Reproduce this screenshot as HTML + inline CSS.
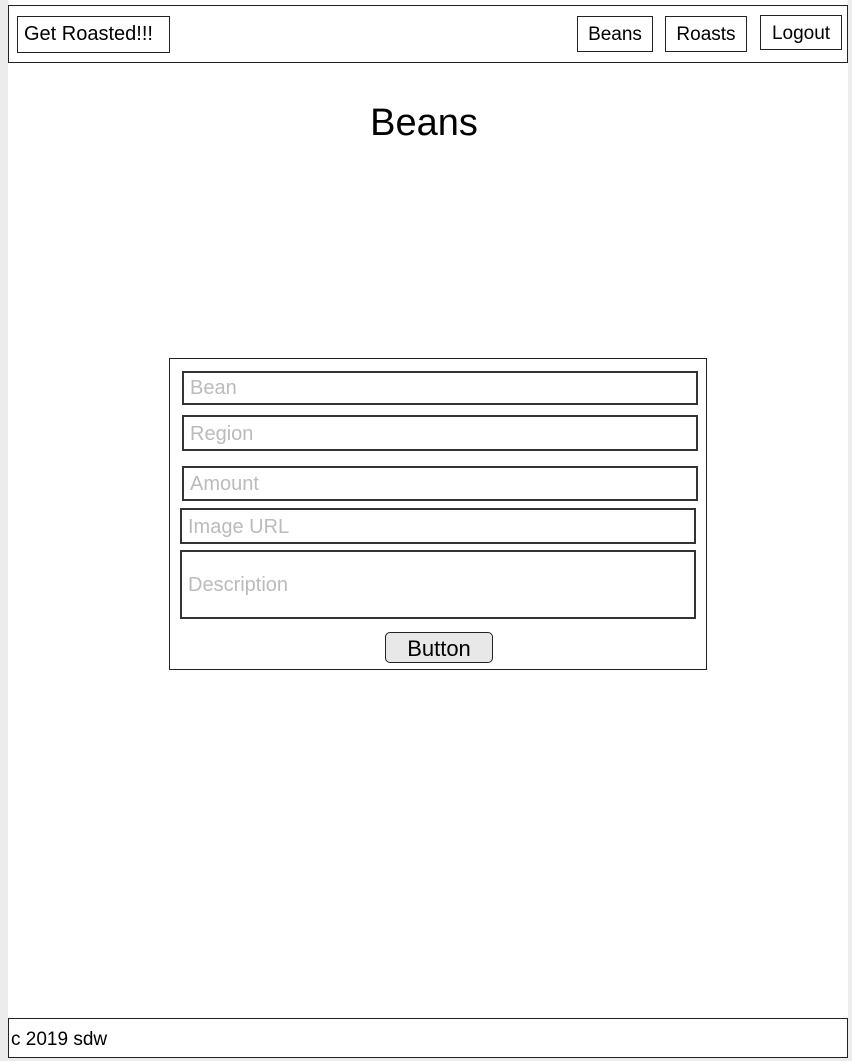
<!DOCTYPE html>
<html><head><style>
body{margin:0;width:852px;height:1054px;background:#ececec;position:relative;overflow:hidden;font-family:"Liberation Sans",Arial,sans-serif;}
.abs{position:absolute;box-sizing:border-box;}
.main{left:8px;top:0;width:840px;height:1054px;background:#fff;}
.hdr{left:8px;top:5px;width:840px;height:58px;border:1.5px solid #222;background:#fff;}
.btn{border:1.5px solid #222;font-size:19px;line-height:35px;text-align:center;color:#000;}
.inp{border:2px solid #333;font-size:20px;color:#bbb;padding-left:6px;background:#fff;}
</style></head><body>
<div class="abs main"></div>
<div class="abs hdr"></div>
<div class="abs btn" style="left:17px;top:16px;width:153px;height:37px;text-align:left;padding-left:6px;font-size:20px;">Get Roasted!!!</div>
<div class="abs btn" style="left:577px;top:16px;width:76px;height:36px;">Beans</div>
<div class="abs btn" style="left:665px;top:16px;width:82px;height:36px;">Roasts</div>
<div class="abs btn" style="left:760px;top:15px;width:82px;height:35px;">Logout</div>
<div class="abs" style="left:8px;top:102px;width:832px;text-align:center;font-size:38px;">Beans</div>
<div class="abs" style="left:169px;top:358px;width:538px;height:312px;border:1.5px solid #222;"></div>
<div class="abs inp" style="left:182px;top:371px;width:516px;height:34px;line-height:31px;">Bean</div>
<div class="abs inp" style="left:182px;top:415px;width:516px;height:36px;line-height:34px;">Region</div>
<div class="abs inp" style="left:182px;top:466px;width:516px;height:35px;line-height:33px;">Amount</div>
<div class="abs inp" style="left:180px;top:508px;width:516px;height:36px;line-height:34px;">Image URL</div>
<div class="abs inp" style="left:180px;top:550px;width:516px;height:69px;line-height:66px;">Description</div>
<div class="abs" style="left:385px;top:632px;width:108px;height:31px;border:1.5px solid #222;border-radius:5px;background:#e8e8e8;font-size:22px;text-align:center;line-height:31px;">Button</div>
<div class="abs" style="left:8px;top:1018px;width:840px;height:40px;border:1.5px solid #222;background:#fff;font-size:19px;padding-left:2px;line-height:42px;">c 2019 sdw</div>
</body></html>
